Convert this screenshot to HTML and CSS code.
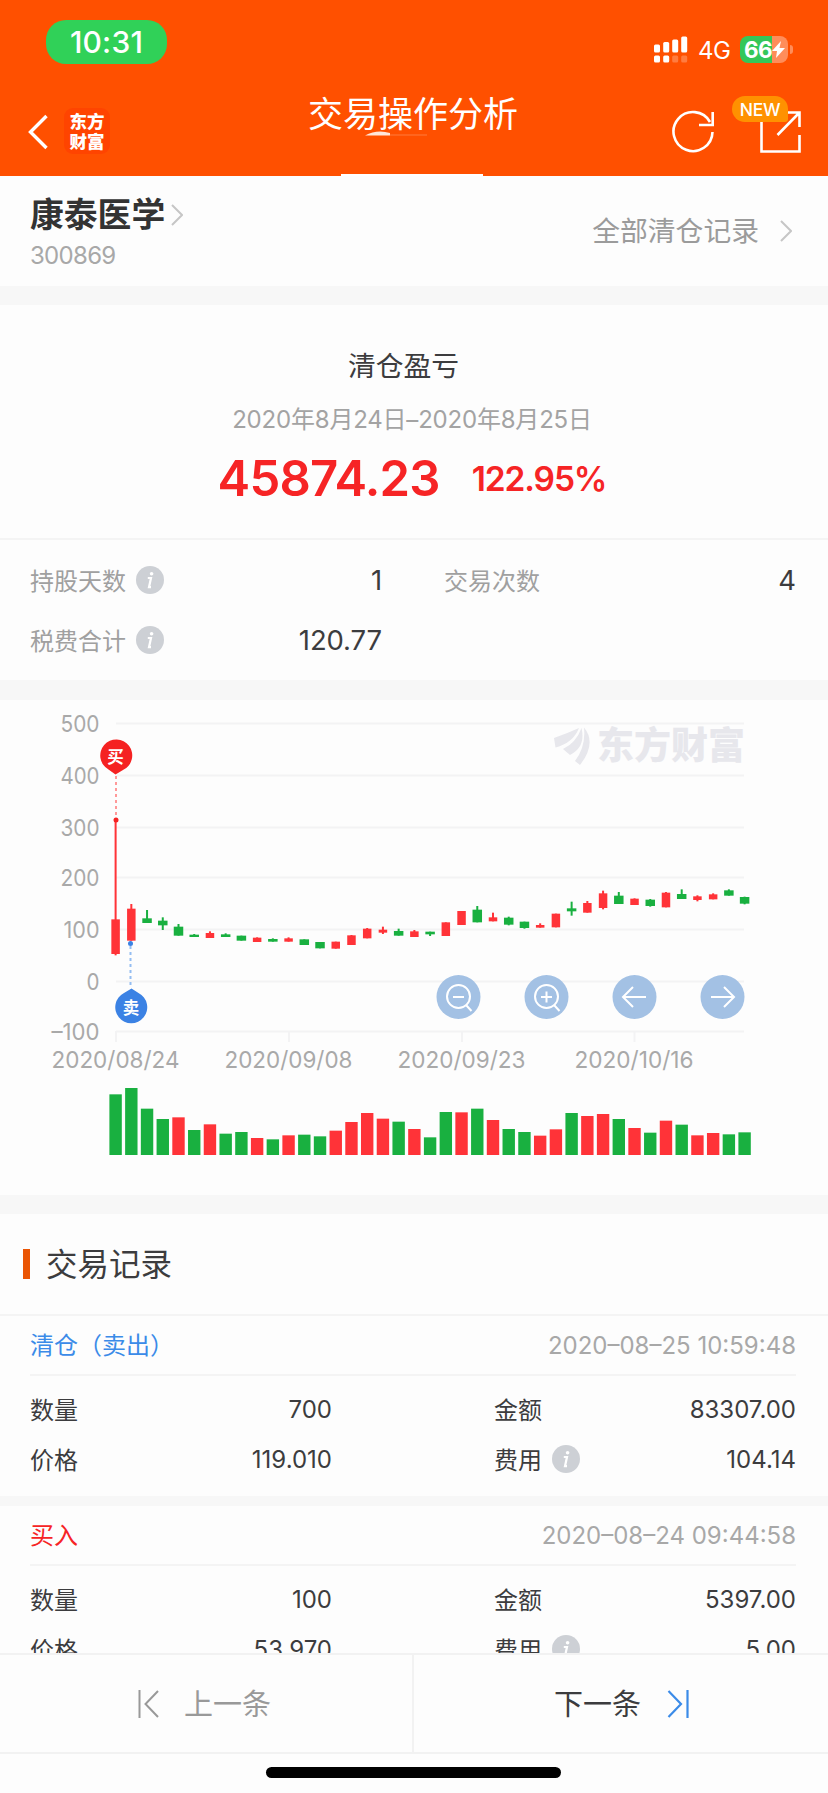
FILE: index.html
```html
<!DOCTYPE html>
<html lang="zh-CN">
<head>
<meta charset="UTF-8">
<title>交易操作分析</title>
<link rel="stylesheet" href="styles.css">
</head>
<body>

<svg width="0" height="0" class="defs">
  <symbol id="info" viewBox="0 0 28 28">
    <circle cx="14" cy="14" r="14" fill="#cdd0d5"/>
    <circle cx="15.6" cy="7.8" r="1.8" fill="#fff"/>
    <path d="M11.800 12h3.200l-2 9.200h2" fill="none" stroke="#fff" stroke-width="2.2"/>
  </symbol>
  <symbol id="chevron" viewBox="0 0 12 22">
    <path d="M1 1l10 10L1 21" fill="none" stroke="#c6c6c6" stroke-width="2"/>
  </symbol>
</svg>

<div class="screen">
  <header class="header">
    <div class="status">
      <span class="time">10:31</span>
      <div class="status-right">
        <svg width="34" height="27" viewBox="0 0 34 27" fill="#fff">
          <rect x="0" y="8.500" width="6" height="8" rx="1.500"/>
          <rect x="9.200" y="6" width="6" height="10.500" rx="1.500"/>
          <rect x="18.200" y="3.500" width="6" height="13" rx="1.500"/>
          <rect x="27.200" y="0.500" width="6" height="16" rx="1.500"/>
          <rect x="0" y="19.500" width="6" height="7" rx="1.500"/>
          <rect x="9.200" y="19.500" width="6" height="7" rx="1.500"/>
          <rect x="18.200" y="19.500" width="6" height="7" rx="1.500" opacity=".25"/>
          <rect x="27.200" y="19.500" width="6" height="7" rx="1.500" opacity=".25"/>
        </svg>
        <span class="net">4G</span>
        <div class="battery">
          <span>66</span>
          <svg width="13" height="17" viewBox="0 0 13 17"><path d="M9 0L0 10h5L4 17l9-10H7.500z" fill="#fff"/></svg>
        </div>
      </div>
    </div>
    <div class="nav">
      <div class="nav-left">
        <svg width="21" height="36" viewBox="0 0 21 36"><path d="M18.500 2L2.500 18l16 16" fill="none" stroke="#fff" stroke-width="3.400"/></svg>
        <div class="brand">东方<br>财富</div>
      </div>
      <h1>交易操作分析</h1>
      <div class="nav-right">
        <svg width="44" height="44" viewBox="0 0 44 44" fill="none" stroke="#fff" stroke-width="2.600">
          <path d="M41.500 22A19.500 19.500 0 1 1 39 12"/>
          <path d="M41.700 2v13H28"/>
        </svg>
        <div class="share">
          <svg width="42" height="42" viewBox="0 0 42 42" fill="none" stroke="#fff" stroke-width="2.600">
            <path d="M1.500 10v30.500h38V24"/>
            <path d="M27 1.500h12.500V16M39.500 1.500L17.500 24"/>
          </svg>
          <span class="new">NEW</span>
        </div>
      </div>
    </div>
    <svg class="smudge" width="62" height="6" viewBox="0 0 62 6"><path d="M0 4.500Q12-2 25 2v2.500z" fill="#ffe6da"/><path d="M25 4h37" stroke="#ff7a3c"/></svg>
    <div class="tab"></div>
  </header>

  <section class="stock">
    <div>
      <div class="stock-name">康泰医学<svg width="12" height="22"><use href="#chevron"/></svg></div>
      <div class="stock-code">300869</div>
    </div>
    <div class="all"><span>全部清仓记录</span><svg width="12" height="22"><use href="#chevron"/></svg></div>
  </section>

  <section class="profit">
    <div class="profit-title">清仓盈亏</div>
    <div class="profit-date">2020年8月24日–2020年8月25日</div>
    <div class="profit-num"><b>45874.23</b><span>122.95%</span></div>
  </section>
  <section class="stats">
    <div class="stat"><span>持股天数</span><svg width="28" height="28"><use href="#info"/></svg><b>1</b></div>
    <div class="stat"><span>交易次数</span><b>4</b></div>
    <div class="stat"><span>税费合计</span><svg width="28" height="28"><use href="#info"/></svg><b>120.77</b></div>
  </section>

  <section class="chart">
    <svg width="828" height="495" viewBox="0 700 828 495">
      <g id="grid"></g>
      <g class="mark">
        <path d="M554 738Q568 733 579 728Q573 743 555.500 747.500zM563 749Q576 743 581.500 728Q586 747 570 755zM575 761Q586 747 584 727.500Q597 743 580 765z"/>
        <text x="597" y="759" textLength="148">东方财富</text>
      </g>
      <g id="candles"></g>
      <g id="volume"></g>
      <path d="M116 776v42" class="dash buy"/>
      <circle cx="116" cy="820" r="2.500" fill="#f52222"/>
      <path d="M115.500 774.500l-7-5A16 16 0 1 1 123 770z" fill="#f52222"/>
      <text x="115.500" y="762.500" class="pin">买</text>
      <path d="M130.500 946v42" class="dash sell"/>
      <circle cx="130.500" cy="943.500" r="2.500" fill="#3b82e4"/>
      <path d="M131.500 988.500l7 4.500A16 16 0 1 1 124 993z" fill="#3b82e4"/>
      <text x="131" y="1014" class="pin">卖</text>
      <g class="btn">
        <circle cx="458.500" cy="997" r="22"/>
        <path d="M453 997h11M466 1005l5.500 6"/><circle cx="458.500" cy="996.500" r="11.500" class="lens"/>
        <circle cx="546.500" cy="997" r="22"/>
        <path d="M541 997h11M546.500 991.500v11M554 1005l5.500 6"/><circle cx="546.500" cy="996.500" r="11.500" class="lens"/>
        <circle cx="634.500" cy="997" r="22"/>
        <path d="M646 997h-23M633 987l-10 10 10 10"/>
        <circle cx="722.500" cy="997" r="22"/>
        <path d="M711 997h23M724 987l10 10-10 10"/>
      </g>
    </svg>
  </section>

  <h2 class="records-title"><span>交易记录</span></h2>
  <section class="record">
    <div class="record-head sell"><span>清仓（卖出）</span><time>2020–08–25 10:59:48</time></div>
    <div class="record-row"><span>数量</span><b>700</b><span>金额</span><b>83307.00</b></div>
    <div class="record-row"><span>价格</span><b>119.010</b><span>费用<svg width="28" height="28"><use href="#info"/></svg></span><b>104.14</b></div>
  </section>
  <section class="record cut">
    <div class="record-head buy"><span>买入</span><time>2020–08–24 09:44:58</time></div>
    <div class="record-row"><span>数量</span><b>100</b><span>金额</span><b>5397.00</b></div>
    <div class="record-row"><span>价格</span><b>53.970</b><span>费用<svg width="28" height="28"><use href="#info"/></svg></span><b>5.00</b></div>
  </section>

  <footer class="pager">
    <div class="prev">
      <svg width="22" height="30" viewBox="0 0 22 30" fill="none" stroke="#999" stroke-width="2"><path d="M1.500 1v28M20 2L7.500 15 20 28"/></svg>
      <span>上一条</span>
    </div>
    <div class="next">
      <span>下一条</span>
      <svg width="22" height="30" viewBox="0 0 22 30" fill="none" stroke="#3b8be8" stroke-width="2.200"><path d="M20.500 1v28M1.500 2L14 15 1.500 28"/></svg>
    </div>
  </footer>
  <div class="home"><i></i></div>
</div>

<script src="chart.js"></script>
</body>
</html>
```
FILE: styles.css
```css
html, body { margin: 0; padding: 0; }
body {
  width: 828px;
  height: 1793px;
  overflow: hidden;
  background: #fdfdfd;
  color: #3c3c3e;
  font-family: Inter, "Noto Sans CJK SC", sans-serif;
  font-size: 24px;
}
* { box-sizing: border-box; }
b { font-weight: 400; }
.defs { position: absolute; }
svg { display: block; flex: none; }

.screen {
  display: flex;
  flex-direction: column;
  height: 1793px;
}

/* header */
.header {
  position: relative;
  height: 176px;
  background: #ff5000;
  color: #fff;
}
.status {
  display: flex;
  justify-content: space-between;
  height: 84px;
  padding: 20px 35px 0 46px;
}
.time {
  width: 121px;
  height: 44px;
  border-radius: 20px;
  background: #30d158;
  font-size: 30px;
  font-weight: 500;
  line-height: 44px;
  text-align: center;
  letter-spacing: 0.2px;
}
.status-right {
  display: flex;
  align-items: center;
  height: 27px;
  margin-top: 16px;
}
.net {
  width: 34px;
  margin: 2px 8px 0 10px;
  font-size: 24px;
  letter-spacing: -0.6px;
}
.battery {
  position: relative;
  display: flex;
  align-items: center;
  width: 48px;
  height: 27px;
  margin-right: 5px;
  padding-left: 4px;
  border-radius: 8px;
  background: linear-gradient(90deg, #34c759 66%, #ff8d5a 66%);
  font-size: 22.5px;
  font-weight: 700;
  letter-spacing: -0.5px;
}
.battery::after {
  content: "";
  position: absolute;
  left: 50px;
  top: 9px;
  width: 3px;
  height: 9px;
  border-radius: 0 3px 3px 0;
  background: #ff8d5a;
}
.nav {
  display: flex;
  justify-content: space-between;
  height: 92px;
  padding: 0 26px 0 28px;
}
.nav-left { display: flex; gap: 15px; padding-top: 24px; }
.nav-left svg { margin-top: 6px; }
.brand {
  width: 46px;
  height: 46px;
  padding-top: 3px;
  border-radius: 9px;
  background: #ff4400;
  font-family: "Noto Sans CJK SC", sans-serif;
  font-size: 17.5px;
  font-weight: 900;
  line-height: 20px;
  text-align: center;
}
.nav h1 {
  margin: 4px 0 0 45px;
  font-size: 35px;
  font-weight: 400;
  line-height: 52px;
}
.nav-right { display: flex; gap: 45px; padding-top: 26px; }
.share { position: relative; padding-top: 1px; }
.new {
  position: absolute;
  left: -28px;
  top: -14px;
  width: 56px;
  height: 26px;
  border-radius: 13px 13px 3px 13px;
  background: #ff9100;
  font-size: 17.5px;
  font-weight: 500;
  line-height: 27px;
  text-align: center;
  letter-spacing: -0.3px;
}
.smudge { position: absolute; left: 365px; top: 131px; }
.tab {
  position: absolute;
  left: 341px;
  bottom: 0;
  width: 142px;
  height: 2px;
  background: #fff;
}

/* stock */
.stock {
  display: flex;
  justify-content: space-between;
  height: 129px;
  padding: 0 36px 0 30px;
  border-bottom: 19px solid #f7f7f7;
}
.stock-name {
  display: flex;
  gap: 6px;
  height: 50px;
  margin-top: 14px;
  color: #333;
  font-size: 33.8px;
  font-weight: 700;
  line-height: 50px;
}
.stock-name svg { margin-top: 14px; }
.stock-code {
  color: #a8a8a8;
  line-height: 32px;
  letter-spacing: -0.7px;
}
.all {
  display: flex;
  align-items: center;
  gap: 21px;
  height: 110px;
  color: #9b9b9b;
  font-size: 27.8px;
}
.all span { margin-top: -4px; }

/* profit */
.profit {
  height: 235px;
  border-bottom: 2px solid #f4f4f4;
  text-align: center;
}
.profit-title {
  margin: 41px 0 0 -21px;
  font-size: 27.8px;
  line-height: 40px;
}
.profit-date {
  margin: 19px 0 0 -4px;
  color: #a3a3a3;
  line-height: 30px;
  letter-spacing: -0.2px;
}
.profit-num {
  display: flex;
  align-items: center;
  justify-content: center;
  gap: 32px;
  height: 60px;
  margin: 13px 0 0 -4px;
  color: #f62425;
}
.profit-num b { font-size: 49px; font-weight: 600; letter-spacing: -0.8px; }
.profit-num span { margin-top: 2px; font-size: 33.5px; font-weight: 600; letter-spacing: -1.1px; }
.stats {
  display: grid;
  grid-template-columns: 352px 352px;
  grid-auto-rows: 60px;
  column-gap: 62px;
  height: 160px;
  padding: 10px 0 0 30px;
  border-bottom: 20px solid #f7f7f7;
}
.stat { display: flex; align-items: center; color: #a0a0a0; }
.stat span { margin-top: -2px; }
.stat svg { margin-left: 10px; }
.stat b { margin-left: auto; color: #3c3c3e; font-size: 27.5px; letter-spacing: -0.1px; }

/* chart */
.chart { height: 514px; border-bottom: 19px solid #f7f7f7; }
.chart line { stroke: #f3f3f4; stroke-width: 2; }
.axis { fill: #a9a9a9; font-size: 23.2px; }
.up { fill: #ff3338; }
.down { fill: #19b040; }
.mark { fill: #e7e7ec; font-size: 37px; font-weight: 900; }
.pin { fill: #fff; font-size: 16.5px; font-weight: 700; text-anchor: middle; }
.dash { fill: none; stroke-width: 2; stroke-dasharray: 3 3; }
.dash.buy { stroke: #f99; }
.dash.sell { stroke: #94bdf2; }
.btn circle { fill: #a3c1e4; }
.btn path, .btn .lens { fill: none; stroke: #fff; stroke-width: 2; }

/* records */
.records-title {
  display: flex;
  align-items: center;
  gap: 16px;
  height: 102px;
  margin: 0;
  padding-left: 23px;
  border-bottom: 2px solid #f4f4f4;
  font-size: 31.5px;
  font-weight: 400;
}
.records-title span { margin-top: -4px; }
.records-title::before {
  content: "";
  width: 7px;
  height: 30px;
  background: #ea5504;
}
.record {
  height: 190px;
  padding: 0 32px 0 30px;
  border-bottom: 10px solid #f7f7f7;
}
.cut { height: 147px; border: 0; overflow: hidden; }
.record-head {
  display: flex;
  align-items: center;
  justify-content: space-between;
  height: 60px;
  margin-bottom: 8px;
  border-bottom: 2px solid #f4f4f4;
}
.record-head span { margin-top: -3px; }
.record-head.sell { color: #3b8be8; }
.record-head.buy { color: #f62425; }
.record-head time { color: #a8a8a8; }
.record-row {
  display: grid;
  grid-template-columns: 101px 201px 263px 201px;
  align-items: center;
  height: 50px;
}
.record-row span {
  display: flex;
  align-items: center;
  gap: 10px;
  margin-top: -2px;
  white-space: nowrap;
}
.record-row span:nth-child(3) { padding-left: 162px; }
.record-row b { text-align: right; }
.record-row svg { margin-top: 2px; }

/* bottom */
.pager {
  display: flex;
  height: 101px;
  border: solid #f2f2f2;
  border-width: 2px 0;
}
.pager div {
  display: flex;
  align-items: center;
  width: 414px;
  font-size: 29px;
}
.pager span { margin-top: -4px; }
.pager .prev { gap: 24px; padding-left: 138px; border-right: 2px solid #f2f2f2; color: #999; }
.pager .next { gap: 26px; padding-left: 140px; }
.home { padding: 13px 0 0 266px; }
.home i { display: block; width: 295px; height: 11px; border-radius: 6px; background: #000; }
```
FILE: chart.js
```js
// [up?, high, top, bottom, low], thirds of a pixel from y = 690
var days = [
  [1,390,688,792,796],[1,642,656,752,752],[0,660,685,699,699],[0,682,692,706,720],[0,702,710,737,737],
  [0,732,734,741,741],[1,724,729,744,744],[0,730,733,741,741],[0,737,737,752,752],[1,742,743,756,756],
  [0,745,747,755,755],[1,742,745,755,755],[0,748,748,765,765],[0,756,756,775,775],[1,755,755,776,776],
  [1,735,736,765,765],[1,714,716,745,745],[1,710,719,728,732],[0,716,723,737,737],[1,720,724,741,741],
  [0,725,725,733,738],[1,697,697,738,738],[1,663,663,705,705],[0,648,659,697,697],[1,668,682,694,694],
  [0,680,683,704,706],[0,695,695,714,716],[1,700,705,713,713],[1,671,671,712,712],[0,635,655,664,677],
  [1,633,639,668,668],[1,602,610,654,658],[0,606,617,642,642],[1,625,626,645,645],[0,627,629,648,650],
  [1,606,608,652,652],[0,598,612,627,627],[1,616,619,630,634],[1,610,613,628,628],[0,598,601,617,617],
  [0,620,621,641,643]
];
var volumes = [182,201,139,108,113,75,92,64,69,51,47,59,61,56,73,99,126,109,100,78,53,129,128,139,105,
  78,69,58,77,126,117,123,108,81,67,103,91,59,66,62,68];
var volumeUp = "00001010010100111101001010011011010101100";

var grid = "", candles = "", volume = "";

function label(text, x, y, w) {
  return '<text class="axis" x="' + x + '" y="' + y + '" textLength="' + w + '" lengthAdjust="spacingAndGlyphs">' + text + '</text>';
}

[["500", 723.5, 39], ["400", 775.5, 39], ["300", 827.5, 39], ["200", 877.5, 39], ["100", 929.5, 36], ["0", 981.5, 13], ["–100", 1031.5, 48]].forEach(function(d) {
  grid += '<line x1="116" x2="744" y1="' + d[1] + '" y2="' + d[1] + '"/>';
  grid += label(d[0], 99.5 - d[2], d[1] + 8, d[2]);
});
[["2020/08/24", 115.5, 128], ["2020/09/08", 288.5, 128], ["2020/09/23", 461.5, 128], ["2020/10/16", 634, 119]].forEach(function(d) {
  grid += '<line x1="' + (d[1] + 0.5) + '" x2="' + (d[1] + 0.5) + '" y1="1031" y2="1042"/>';
  grid += label(d[0], d[1] - d[2] / 2, 1068, d[2]);
});

function rect(up, x, y, w, h) {
  return '<rect class="' + (up ? "up" : "down") + '" x="' + x + '" y="' + y + '" width="' + w + '" height="' + h + '"/>';
}

days.forEach(function(d, i) {
  var x = 115.6 + i * 15.725;
  var w = d[0] ? 8.5 : 9.5;
  candles += rect(d[0], x - 1, 690 + d[1] / 3, 2, (d[4] - d[1]) / 3);
  candles += rect(d[0], x - w / 2, 690 + d[2] / 3, w, (d[3] - d[2]) / 3);
  volume += rect(volumeUp[i] == "1", x - 6.2, 1155 - volumes[i] / 3, 12.4, volumes[i] / 3);
});

document.getElementById("grid").innerHTML = grid;
document.getElementById("candles").innerHTML = candles;
document.getElementById("volume").innerHTML = volume;
```
